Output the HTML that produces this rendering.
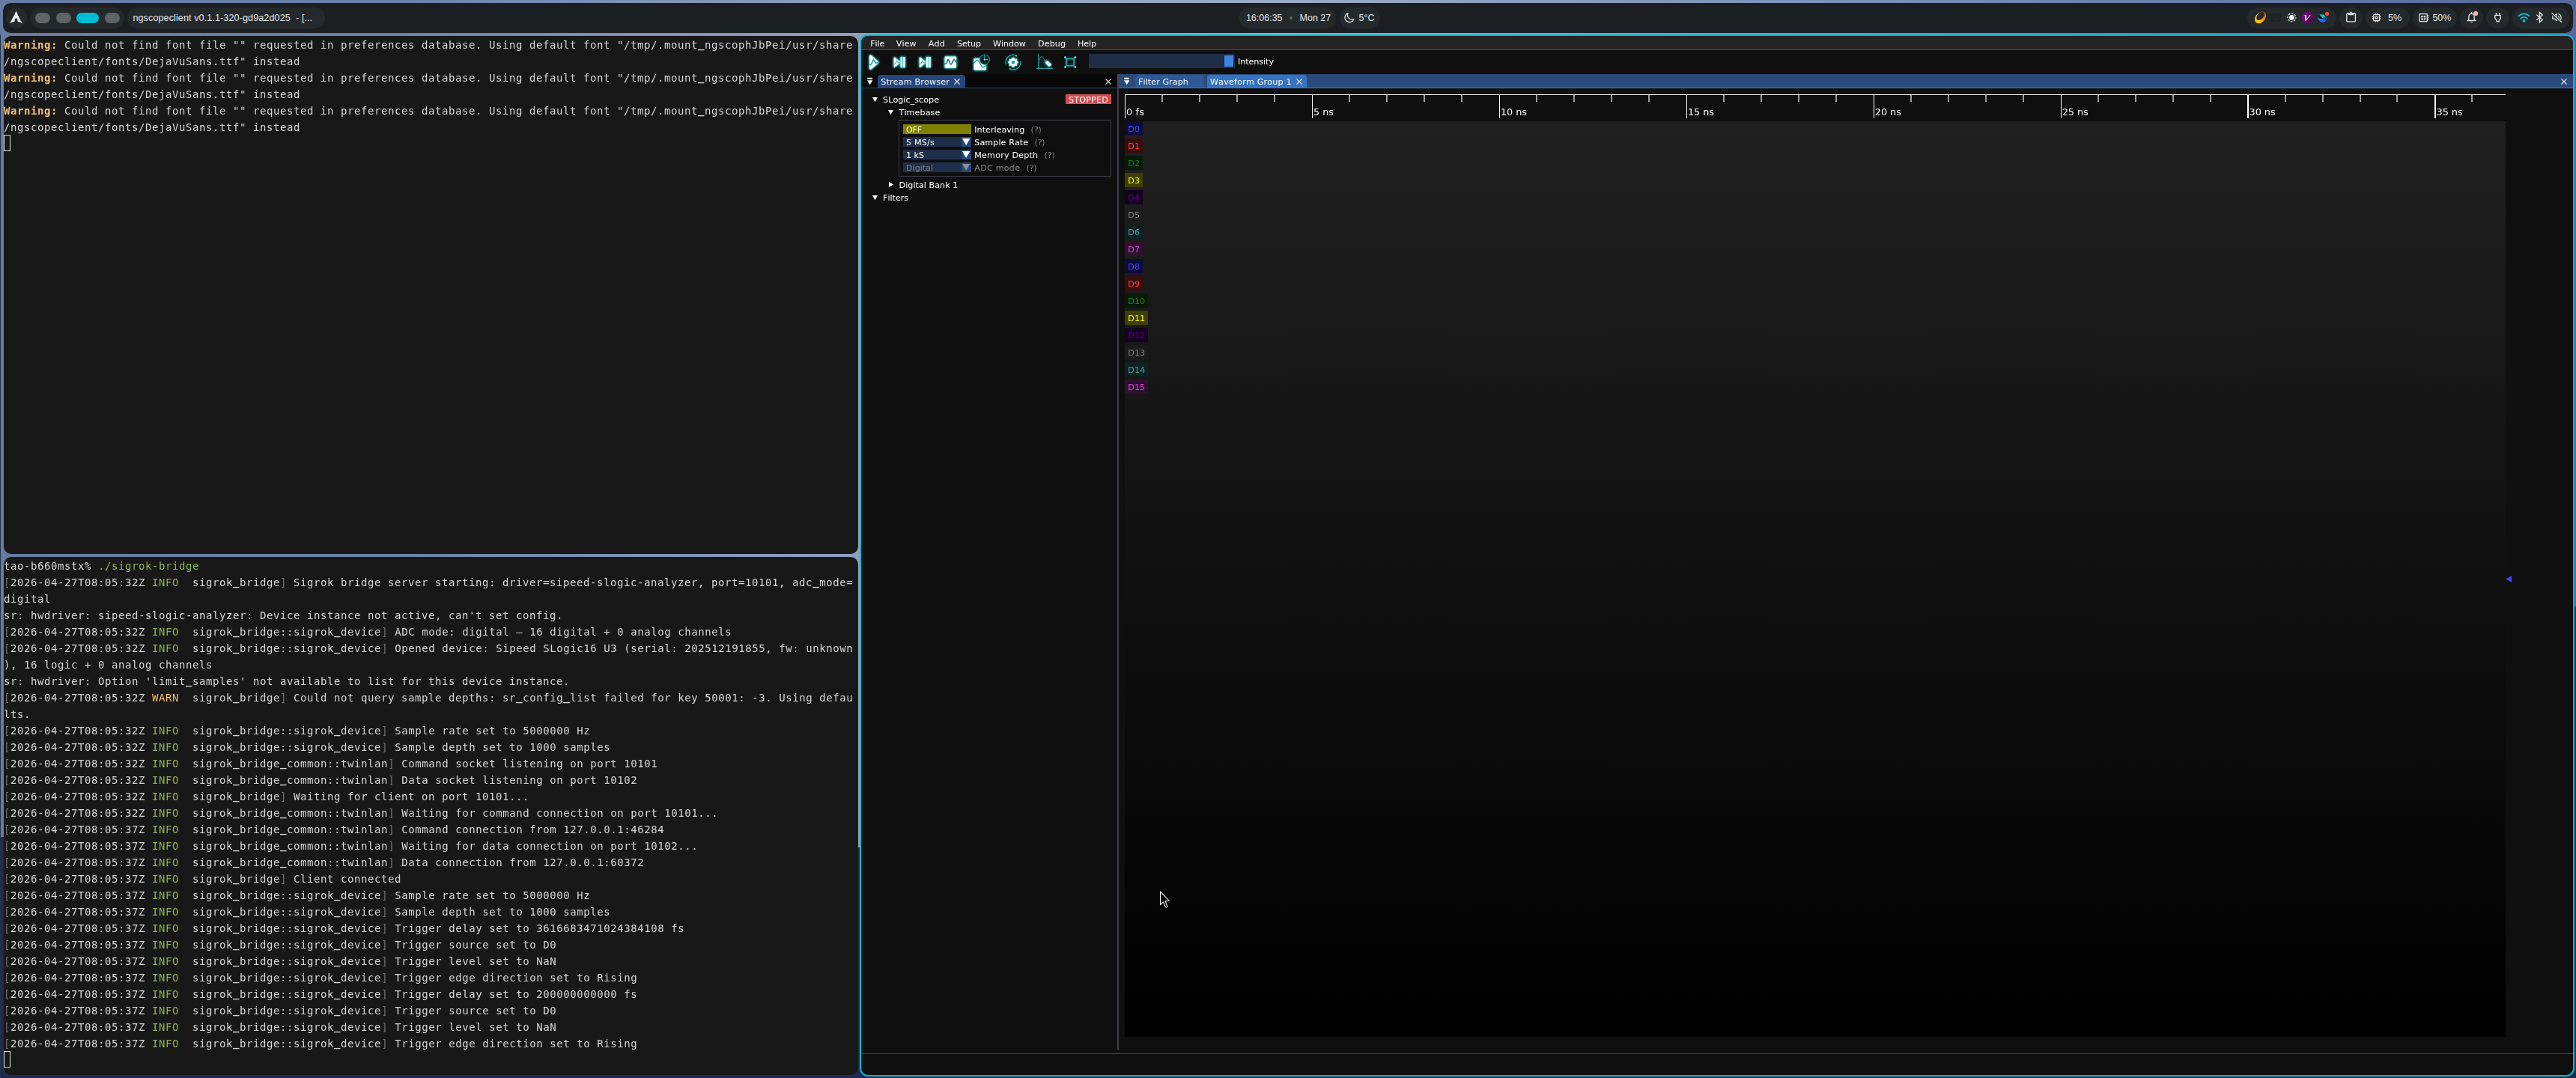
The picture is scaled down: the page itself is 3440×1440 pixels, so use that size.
<!DOCTYPE html>
<html lang="en"><head><meta charset="utf-8"><title>desktop</title>
<style>
*{box-sizing:border-box;margin:0;padding:0}
html,body{width:3440px;height:1440px;overflow:hidden}
body{position:relative;background:linear-gradient(90deg,#667ba3 0%,#6a82aa 15%,#8ea0c0 33%,#9aabc6 50%,#7d92b8 70%,#56699a 100%);
 font-family:"Liberation Sans",sans-serif}
#wall{position:absolute;left:0;top:0;width:3440px;height:1440px;background:#1d2c50;clip-path:polygon(0 1118px,1147px 1132px,3440px 810px,3440px 1440px,0 1440px)}
#ledge{position:absolute;left:0;top:46px;width:1px;height:1394px;background:#26324a}
.abs{position:absolute}

/* ---------- top bar ---------- */
#bar{position:absolute;left:4px;top:4px;width:3432px;height:40px;background:#1b1f22;border-radius:10px}
.pill{position:absolute;top:6px;height:28px;border-radius:14px;background:#24292c}
.bt{position:absolute;top:0;height:28px;line-height:28px;font-size:12.5px;color:#e4e6e8;white-space:pre}
.ws{position:absolute;top:7px;height:14px;border-radius:7px;background:#5f6467}
.pill svg{position:absolute;overflow:visible}

/* ---------- terminals ---------- */
.term{position:absolute;left:5px;width:1141px;height:692px;background:#181818;border-radius:10px;overflow:hidden;
 font-family:"DejaVu Sans Mono","Liberation Mono",monospace;font-size:14px;letter-spacing:0.5715px;color:#d6d6d6}
#term1{top:48px}
#term2{top:744px}
.tx{position:absolute;left:0;top:1px;width:1141px;height:690px;will-change:transform}
.ln{position:absolute;left:0;height:22px;line-height:22px;white-space:pre}
.u{position:relative;top:-1.2px;font-weight:bold}
.wb{font-weight:bold;color:#f6c177}
.gd{color:#707070}
.gi{color:#8fb052}
.gw{color:#f4bf6c}
.cur{position:absolute;left:0;width:9px;height:22px;border:1px solid #e6e6e6}

/* ---------- ngscopeclient ---------- */
#ngs{position:absolute;left:1148px;top:46px;width:2290px;height:1392px;border:2px solid #00bcd4;border-radius:11px;background:#0f0f0f;overflow:hidden;
 font-family:"DejaVu Sans","Liberation Sans",sans-serif;font-size:11.17px;color:#fff}
#ngsin{position:absolute;left:-1150px;top:-48px;width:3440px;height:1440px;will-change:transform}
#ngsin div{position:absolute}
.t{white-space:pre;line-height:13px;height:13px;font-kerning:none;font-variant-ligatures:none}
#menubar{left:1150px;top:48px;width:2286px;height:18px;background:#242424}
#menuline{left:1150px;top:66px;width:2286px;height:1px;background:#4a4a54}
#ltabbar{left:1150px;top:99px;width:342px;height:18px;background:#080808}
#ltabline{left:1150px;top:117px;width:342px;height:1px;background:#24467a}
#ltab{left:1172px;top:100px;width:117px;height:17px;background:#24467a;border-radius:4px 4px 0 0}
#split{left:1492px;top:99px;width:2px;height:1304px;background:#42424c}
#rtabbar{left:1494px;top:99px;width:1942px;height:18px;background:#2a4a7c}
#rtabline{left:1494px;top:117px;width:1942px;height:1px;background:#3b7bd0}
#rtab1{left:1516px;top:100px;width:92px;height:17px;background:#2d5a96;border-radius:4px 4px 0 0}
#rtab2{left:1612px;top:100px;width:133px;height:17px;background:#3572c0;border-radius:4px 4px 0 0}
#statline{left:1150px;top:1407px;width:2286px;height:1px;background:#42424c}
#tl{left:0;top:0;width:3440px;height:0}
#tltop{left:1502px;top:126px;width:1844px;height:1.3px;background:#fff}
.tkM{top:126px;width:1.6px;height:32px;background:#fff}
.tkm{top:127px;width:2.1px;height:9.2px;background:#9c9c9c}
.tkL{top:142px;font-size:12.886px;white-space:pre;line-height:15px;font-kerning:none;font-variant-ligatures:none}
#wave{left:1502px;top:162px;width:1844px;height:1223px;background:linear-gradient(180deg,#202020,#000)}
.ch{left:1502px;height:19px;line-height:22.6px;overflow:hidden;padding-left:4.3px;white-space:pre;font-kerning:none;font-variant-ligatures:none}
#slider{left:1454px;top:72px;width:194.5px;height:19px;background:#1f2d47}
#grab{left:1634.5px;top:74px;width:12px;height:15px;background:#3d85e0}
#stopped{left:1423px;top:126px;width:61.3px;height:13px;background:#cf4a4e;border:1px solid #de5659}
#tbframe{left:1200px;top:160px;width:284px;height:76px;border:1px solid #3c3c46}
.combo{left:1206px;width:91.2px;height:13px;background:#1f2f4a}
.cbtn{left:1284px;width:13.2px;height:13px;background:#244878}
.dim{color:#808080}
svg{overflow:visible}

</style></head>
<body>
<div id="wall"></div>
<div id="ledge"></div>
<div id="bar">
 <div class="pill" style="left:4px;width:28px">
  <svg style="left:4.6px;top:4.3px" width="17.9" height="17.9" viewBox="0 0 24 24"><path fill="#f2f4f8" d="M11.39.605C10.376 3.092 9.764 4.72 8.635 7.132c.693.734 1.543 1.589 2.923 2.554-1.484-.61-2.496-1.224-3.252-1.86C6.86 10.842 4.596 15.138 0 23.395c3.612-2.085 6.412-3.37 9.021-3.862a6.61 6.61 0 01-.171-1.547l.003-.115c.058-2.315 1.261-4.095 2.687-3.973 1.426.12 2.534 2.096 2.478 4.409a6.52 6.52 0 01-.146 1.243c2.58.505 5.352 1.787 8.914 3.844-.702-1.293-1.33-2.459-1.929-3.57-.943-.73-1.926-1.682-3.933-2.713 1.38.359 2.367.772 3.137 1.234-6.09-11.334-6.582-12.84-8.67-17.74z"/></svg>
 </div>
 <div class="pill" style="left:36px;width:126px">
  <div class="ws" style="left:7px;width:20px"></div>
  <div class="ws" style="left:34.5px;width:20px"></div>
  <div class="ws" style="left:62px;width:30px;background:#00bcd4"></div>
  <div class="ws" style="left:99.5px;width:20px"></div>
 </div>
 <div class="pill" style="left:166px;width:264px">
  <div class="bt" style="left:7.4px;font-size:12.7px;letter-spacing:0.05px">ngscopeclient v0.1.1-320-gd9a2d025  - [...</div>
 </div>

 <div class="pill" style="left:1651.4px;width:129px">
  <div class="bt" style="left:8.5px">16:06:35</div>
  <div class="abs" style="left:66.4px;top:11.9px;width:4.6px;height:4.6px;border-radius:50%;background:#5d6366"></div>
  <div class="bt" style="left:80.2px">Mon 27</div>
 </div>
 <div class="pill" style="left:1784.6px;width:54px">
  <svg style="left:6.9px;top:6.1px" width="14" height="14" viewBox="0 0 14 14"><path fill="none" stroke="#e4e6e8" stroke-width="1.2" stroke-linejoin="round" d="M5.21 1.53A6.2 6.2 0 1 0 13.07 9.39A5.8 5.8 0 0 1 5.21 1.53Z"/></svg>
  <div class="bt" style="left:26px">5°C</div>
 </div>

 <div class="pill" style="left:2997px;width:119px" id="tray"></div>
 <div class="pill" style="left:3120px;width:31px" id="clip"></div>
 <div class="pill" style="left:3155px;width:58.7px" id="cpu">
  <div class="bt" style="left:30px">5%</div>
 </div>
 <div class="pill" style="left:3218px;width:59px" id="ram">
  <div class="bt" style="left:26.4px">50%</div>
 </div>
 <div class="pill" style="left:3281px;width:31px" id="bell"></div>
 <div class="pill" style="left:3315.7px;width:31px" id="plug"></div>
 <div class="pill" style="left:3350.7px;width:77.3px" id="net"></div>
<!--IC0--> <svg class="abs" style="left:-4px;top:-4px" width="3440" height="48" viewBox="0 0 3440 48">
 <defs>
  <linearGradient id="sun" x1="3012" y1="27" x2="3026" y2="20" gradientUnits="userSpaceOnUse"><stop offset="0" stop-color="#ffb400"/><stop offset="0.3" stop-color="#ffd400"/><stop offset="0.62" stop-color="#f58a10"/><stop offset="1" stop-color="#ee4a20"/></linearGradient>
  <radialGradient id="pur" cx="3083.5" cy="25" r="8.5" gradientUnits="userSpaceOnUse"><stop offset="0" stop-color="#3c0040"/><stop offset="0.55" stop-color="#5e0062"/><stop offset="1" stop-color="#86008a"/></radialGradient>
 </defs>
 <!-- tray -->
 <path fill="url(#sun)" fill-rule="evenodd" d="M3012.48 30.09A9 6.3 -48 1 0 3024.52 16.71A9 6.3 -48 1 0 3012.48 30.09ZM3014.23 26.28A6.5 4.0 -48 1 1 3022.92 16.62A6.5 4.0 -48 1 1 3014.23 26.28Z"/>
 <rect x="3032.2" y="18.2" width="13.6" height="10.5" rx="1.6" fill="#1f2123"/>
 <rect x="3036" y="25.9" width="6" height="0.9" fill="#2b3033"/>
 <g fill="#25292b"><rect x="3034.2" y="20.4" width="1.2" height="1.2"/><rect x="3036.9" y="20.4" width="1.2" height="1.2"/><rect x="3039.6" y="20.4" width="1.2" height="1.2"/><rect x="3042.3" y="20.4" width="1.2" height="1.2"/><rect x="3034.2" y="23" width="1.2" height="1.2"/><rect x="3036.9" y="23" width="1.2" height="1.2"/><rect x="3039.6" y="23" width="1.2" height="1.2"/><rect x="3042.3" y="23" width="1.2" height="1.2"/></g>
 <circle cx="3060.4" cy="23.4" r="3.3" fill="#fff"/>
 <circle cx="3060.4" cy="23.4" r="5.4" fill="none" stroke="#d4d8da" stroke-width="1.35" stroke-dasharray="2.6 1.64" stroke-dashoffset="1.3"/>
 <circle cx="3081.6" cy="23.6" r="7.5" fill="url(#pur)"/>
 <path d="M3077 20.3H3080.4L3080.0 20.9L3079.9 26L3084 20.9L3083.2 20.3H3086L3079.2 28.2H3078.6L3077.9 21.2Z" fill="#fff"/>
 <path d="M3086 20.3L3079.2 28.2L3080 28.2L3086.6 20.8Z" fill="#2a002c"/>
 <!-- bird logo -->
 <path d="M3095 22.6C3095.2 27 3098 29.8 3101.4 29.8C3104.8 29.8 3107.6 26.6 3108 22.2C3104.8 24.6 3099.6 26.2 3095 22.6Z" fill="#2b6bf3"/>
 <path d="M3108 22.2C3105.8 23.6 3103 24.4 3100.4 24.6C3102.6 25.6 3104.6 26.6 3106.2 27.4C3107.3 26 3107.9 24.2 3108 22.2Z" fill="#173c9e"/>
 <path d="M3095.2 22.5L3097.3 20.6L3101.6 24.6L3099.6 25.2C3097.8 24.6 3096.4 23.6 3095.2 22.5Z" fill="#0c0f14"/>
 <path d="M3097.2 19.6H3103.6L3105.2 22.4L3101.7 24.3Z" fill="#06d6b4"/>
 <circle cx="3107.6" cy="18.4" r="2.55" fill="#f4483f"/>
 <!-- clipboard -->
 <rect x="3133.8" y="17.8" width="11.6" height="11.1" rx="0.9" fill="none" stroke="#e6e8ea" stroke-width="1.3"/>
 <path d="M3136 17.2H3138.1C3138.3 15.9 3138.8 15.4 3139.5 15.4C3140.2 15.4 3140.7 15.9 3140.9 17.2H3143.1V20.2H3136Z" fill="#e6e8ea"/>
 <circle cx="3139.5" cy="17.3" r="0.55" fill="#24292c"/>
 <!-- cpu -->
 <g transform="translate(3165.75 15.75) scale(0.655)"><path fill="#e6e8ea" d="M15 9H9v6h6V9zm-2 4h-2v-2h2v2zm8-2V9h-2V7c0-1.1-.9-2-2-2h-2V3h-2v2h-2V3H9v2H7c-1.1 0-2 .9-2 2v2H3v2h2v2H3v2h2v2c0 1.1.9 2 2 2h2v2h2v-2h2v2h2v-2h2c1.1 0 2-.9 2-2v-2h2v-2h-2v-2h2zm-4 6H7V7h10v10z"/></g>
 <!-- ram -->
 <rect x="3230.9" y="18.7" width="10.3" height="10" rx="0.6" fill="none" stroke="#e6e8ea" stroke-width="1.3"/>
 <g fill="#e6e8ea"><rect x="3233.2" y="21" width="2.4" height="2.3"/><rect x="3236.7" y="21" width="2.4" height="2.3"/><rect x="3233.2" y="24.3" width="2.4" height="2.3"/><rect x="3236.7" y="24.3" width="2.4" height="2.3"/>
 <rect x="3241.6" y="20.2" width="1.6" height="1.3"/><rect x="3241.6" y="23" width="1.6" height="1.3"/><rect x="3241.6" y="25.8" width="1.6" height="1.3"/></g>
 <!-- bell -->
 <path d="M3296.8 27.2V22.2A3.7 3.9 0 0 1 3304.2 22.2V27.2" fill="none" stroke="#e6e8ea" stroke-width="1.3"/>
 <path d="M3294.5 27.55H3306.7" stroke="#e6e8ea" stroke-width="1.3"/>
 <rect x="3299.8" y="15.9" width="1.4" height="2.4" rx="0.6" fill="#e6e8ea"/>
 <rect x="3299" y="28.9" width="3" height="1.2" rx="0.6" fill="#e6e8ea"/>
 <circle cx="3306.1" cy="18" r="3.1" fill="#f3b3b8"/>
 <!-- plug -->
 <path d="M3333.4 16.9V20.2M3337.8 16.9V20.2" stroke="#e6e8ea" stroke-width="1.3" fill="none"/>
 <path d="M3331.8 20.4H3339.4V24.6L3337.2 27V28.8H3334V27L3331.8 24.6Z" fill="none" stroke="#e6e8ea" stroke-width="1.3" stroke-linejoin="round"/>
 <!-- wifi -->
 <g fill="none" stroke="#00c6e2" stroke-width="1.95" stroke-linecap="round">
  <path d="M3363.5 21.2A10.2 10.2 0 0 1 3377.6 21.2"/>
  <path d="M3366.3 24.6A6 6 0 0 1 3374.7 24.6"/>
 </g>
 <circle cx="3370.5" cy="27.7" r="1.85" fill="#00c6e2"/>
 <!-- bluetooth -->
 <path d="M3387.3 19.8L3395.2 26.6L3391.4 29.8V16.5L3395.2 20L3387.3 26.8" fill="none" stroke="#e6e8ea" stroke-width="1.3" stroke-linejoin="miter"/>
 <!-- volume off -->
 <path d="M3408.8 21.3H3411.2L3414.4 18.6V27.8L3411.2 25.1H3408.8Z" fill="none" stroke="#e6e8ea" stroke-width="1.25" stroke-linejoin="round"/>
 <path d="M3416.4 21.4A2.6 2.6 0 0 1 3416.4 25.4" fill="none" stroke="#e6e8ea" stroke-width="1.25"/>
 <path d="M3416.6 18.4A5.6 5.6 0 0 1 3419 27" fill="none" stroke="#e6e8ea" stroke-width="1.25"/>
 <path d="M3407.2 17.4L3420.6 30" stroke="#24292c" stroke-width="3.2"/>
 <path d="M3407.6 17.3L3421 29.8" stroke="#e6e8ea" stroke-width="1.25"/>
 </svg>
<!--IC1-->
</div>
<div id="term1" class="term"><div class="tx">
<div class="ln" style="top:0px"><span class="wb">Warning:</span> Could not find font file "" requested in preferences database. Using default font "/tmp/.mount<span class="u">_</span>ngscophJbPei/usr/share</div>
<div class="ln" style="top:22px">/ngscopeclient/fonts/DejaVuSans.ttf" instead</div>
<div class="ln" style="top:44px"><span class="wb">Warning:</span> Could not find font file "" requested in preferences database. Using default font "/tmp/.mount<span class="u">_</span>ngscophJbPei/usr/share</div>
<div class="ln" style="top:66px">/ngscopeclient/fonts/DejaVuSans.ttf" instead</div>
<div class="ln" style="top:88px"><span class="wb">Warning:</span> Could not find font file "" requested in preferences database. Using default font "/tmp/.mount<span class="u">_</span>ngscophJbPei/usr/share</div>
<div class="ln" style="top:110px">/ngscopeclient/fonts/DejaVuSans.ttf" instead</div>
</div><div class="cur" style="top:132px"></div>
</div>
<div id="term2" class="term"><div class="tx">
<div class="ln" style="top:0px">tao-b660mstx% <span class="gi">./sigrok-bridge</span></div>
<div class="ln" style="top:22px"><span class="gd">[</span>2026-04-27T08:05:32Z <span class="gi">INFO</span>  sigrok<span class="u">_</span>bridge<span class="gd">]</span> Sigrok bridge server starting: driver=sipeed-slogic-analyzer, port=10101, adc<span class="u">_</span>mode=</div>
<div class="ln" style="top:44px">digital</div>
<div class="ln" style="top:66px">sr: hwdriver: sipeed-slogic-analyzer: Device instance not active, can't set config.</div>
<div class="ln" style="top:88px"><span class="gd">[</span>2026-04-27T08:05:32Z <span class="gi">INFO</span>  sigrok<span class="u">_</span>bridge::sigrok<span class="u">_</span>device<span class="gd">]</span> ADC mode: digital — 16 digital + 0 analog channels</div>
<div class="ln" style="top:110px"><span class="gd">[</span>2026-04-27T08:05:32Z <span class="gi">INFO</span>  sigrok<span class="u">_</span>bridge::sigrok<span class="u">_</span>device<span class="gd">]</span> Opened device: Sipeed SLogic16 U3 (serial: 202512191855, fw: unknown</div>
<div class="ln" style="top:132px">), 16 logic + 0 analog channels</div>
<div class="ln" style="top:154px">sr: hwdriver: Option 'limit<span class="u">_</span>samples' not available to list for this device instance.</div>
<div class="ln" style="top:176px"><span class="gd">[</span>2026-04-27T08:05:32Z <span class="gw">WARN</span>  sigrok<span class="u">_</span>bridge<span class="gd">]</span> Could not query sample depths: sr<span class="u">_</span>config<span class="u">_</span>list failed for key 50001: -3. Using defau</div>
<div class="ln" style="top:198px">lts.</div>
<div class="ln" style="top:220px"><span class="gd">[</span>2026-04-27T08:05:32Z <span class="gi">INFO</span>  sigrok<span class="u">_</span>bridge::sigrok<span class="u">_</span>device<span class="gd">]</span> Sample rate set to 5000000 Hz</div>
<div class="ln" style="top:242px"><span class="gd">[</span>2026-04-27T08:05:32Z <span class="gi">INFO</span>  sigrok<span class="u">_</span>bridge::sigrok<span class="u">_</span>device<span class="gd">]</span> Sample depth set to 1000 samples</div>
<div class="ln" style="top:264px"><span class="gd">[</span>2026-04-27T08:05:32Z <span class="gi">INFO</span>  sigrok<span class="u">_</span>bridge<span class="u">_</span>common::twinlan<span class="gd">]</span> Command socket listening on port 10101</div>
<div class="ln" style="top:286px"><span class="gd">[</span>2026-04-27T08:05:32Z <span class="gi">INFO</span>  sigrok<span class="u">_</span>bridge<span class="u">_</span>common::twinlan<span class="gd">]</span> Data socket listening on port 10102</div>
<div class="ln" style="top:308px"><span class="gd">[</span>2026-04-27T08:05:32Z <span class="gi">INFO</span>  sigrok<span class="u">_</span>bridge<span class="gd">]</span> Waiting for client on port 10101...</div>
<div class="ln" style="top:330px"><span class="gd">[</span>2026-04-27T08:05:32Z <span class="gi">INFO</span>  sigrok<span class="u">_</span>bridge<span class="u">_</span>common::twinlan<span class="gd">]</span> Waiting for command connection on port 10101...</div>
<div class="ln" style="top:352px"><span class="gd">[</span>2026-04-27T08:05:37Z <span class="gi">INFO</span>  sigrok<span class="u">_</span>bridge<span class="u">_</span>common::twinlan<span class="gd">]</span> Command connection from 127.0.0.1:46284</div>
<div class="ln" style="top:374px"><span class="gd">[</span>2026-04-27T08:05:37Z <span class="gi">INFO</span>  sigrok<span class="u">_</span>bridge<span class="u">_</span>common::twinlan<span class="gd">]</span> Waiting for data connection on port 10102...</div>
<div class="ln" style="top:396px"><span class="gd">[</span>2026-04-27T08:05:37Z <span class="gi">INFO</span>  sigrok<span class="u">_</span>bridge<span class="u">_</span>common::twinlan<span class="gd">]</span> Data connection from 127.0.0.1:60372</div>
<div class="ln" style="top:418px"><span class="gd">[</span>2026-04-27T08:05:37Z <span class="gi">INFO</span>  sigrok<span class="u">_</span>bridge<span class="gd">]</span> Client connected</div>
<div class="ln" style="top:440px"><span class="gd">[</span>2026-04-27T08:05:37Z <span class="gi">INFO</span>  sigrok<span class="u">_</span>bridge::sigrok<span class="u">_</span>device<span class="gd">]</span> Sample rate set to 5000000 Hz</div>
<div class="ln" style="top:462px"><span class="gd">[</span>2026-04-27T08:05:37Z <span class="gi">INFO</span>  sigrok<span class="u">_</span>bridge::sigrok<span class="u">_</span>device<span class="gd">]</span> Sample depth set to 1000 samples</div>
<div class="ln" style="top:484px"><span class="gd">[</span>2026-04-27T08:05:37Z <span class="gi">INFO</span>  sigrok<span class="u">_</span>bridge::sigrok<span class="u">_</span>device<span class="gd">]</span> Trigger delay set to 3616683471024384108 fs</div>
<div class="ln" style="top:506px"><span class="gd">[</span>2026-04-27T08:05:37Z <span class="gi">INFO</span>  sigrok<span class="u">_</span>bridge::sigrok<span class="u">_</span>device<span class="gd">]</span> Trigger source set to D0</div>
<div class="ln" style="top:528px"><span class="gd">[</span>2026-04-27T08:05:37Z <span class="gi">INFO</span>  sigrok<span class="u">_</span>bridge::sigrok<span class="u">_</span>device<span class="gd">]</span> Trigger level set to NaN</div>
<div class="ln" style="top:550px"><span class="gd">[</span>2026-04-27T08:05:37Z <span class="gi">INFO</span>  sigrok<span class="u">_</span>bridge::sigrok<span class="u">_</span>device<span class="gd">]</span> Trigger edge direction set to Rising</div>
<div class="ln" style="top:572px"><span class="gd">[</span>2026-04-27T08:05:37Z <span class="gi">INFO</span>  sigrok<span class="u">_</span>bridge::sigrok<span class="u">_</span>device<span class="gd">]</span> Trigger delay set to 200000000000 fs</div>
<div class="ln" style="top:594px"><span class="gd">[</span>2026-04-27T08:05:37Z <span class="gi">INFO</span>  sigrok<span class="u">_</span>bridge::sigrok<span class="u">_</span>device<span class="gd">]</span> Trigger source set to D0</div>
<div class="ln" style="top:616px"><span class="gd">[</span>2026-04-27T08:05:37Z <span class="gi">INFO</span>  sigrok<span class="u">_</span>bridge::sigrok<span class="u">_</span>device<span class="gd">]</span> Trigger level set to NaN</div>
<div class="ln" style="top:638px"><span class="gd">[</span>2026-04-27T08:05:37Z <span class="gi">INFO</span>  sigrok<span class="u">_</span>bridge::sigrok<span class="u">_</span>device<span class="gd">]</span> Trigger edge direction set to Rising</div>
</div><div class="cur" style="top:660px"></div>
</div>
<div id="ngs"><div id="ngsin">
<div id="menubar"></div>
<div id="menuline"></div>
<div class="t" style="left:1162.3px;top:52.4px;letter-spacing:-0.125px">File</div>
<div class="t" style="left:1196.8px;top:52.4px;letter-spacing:0.063px">View</div>
<div class="t" style="left:1239.8px;top:52.4px;letter-spacing:0.061px">Add</div>
<div class="t" style="left:1278.1px;top:52.4px;letter-spacing:-0.101px">Setup</div>
<div class="t" style="left:1326px;top:52.4px;letter-spacing:-0.047px">Window</div>
<div class="t" style="left:1386.1px;top:52.4px;letter-spacing:0.055px">Debug</div>
<div class="t" style="left:1439.1px;top:52.4px;letter-spacing:-0.115px">Help</div>
<!--TB0--><svg class="abs" style="left:1154px;top:68px" width="290" height="30" viewBox="1154 68 290 30">
<defs>
<filter id="gl" x="-40%" y="-40%" width="180%" height="180%" color-interpolation-filters="sRGB">
<feGaussianBlur in="SourceAlpha" stdDeviation="1.35" result="b"/>
<feFlood flood-color="#22c4c4" flood-opacity="1"/><feComposite in2="b" operator="in" result="g"/>
<feMerge><feMergeNode in="g"/><feMergeNode in="g"/><feMergeNode in="g"/><feMergeNode in="SourceGraphic"/></feMerge>
</filter>
<filter id="gl2" x="-40%" y="-40%" width="180%" height="180%" color-interpolation-filters="sRGB"><feGaussianBlur in="SourceAlpha" stdDeviation="1.1" result="b"/><feFlood flood-color="#1a9a9a" flood-opacity="0.8"/><feComposite in2="b" operator="in" result="g"/><feMerge><feMergeNode in="g"/><feMergeNode in="SourceGraphic"/></feMerge></filter>
</defs>
<!-- 1 run -->
<g filter="url(#gl)">
<path d="M1162.4 74.8V91.6L1172 83.2Z" fill="#fff" stroke="#fff" stroke-width="2.6" stroke-linejoin="round"/>
</g>
<path d="M1160.8 86.4L1163.3 86.2L1166.5 79.6L1169.6 84.3L1172.6 83.4" fill="none" stroke="#1aa6a6" stroke-width="1.6" stroke-linejoin="round"/>
<!-- 2 single -->
<g filter="url(#gl)">
<path d="M1194.2 77V89.6L1201.9 83.3Z" fill="#fff" stroke="#fff" stroke-width="1.1" stroke-linejoin="round"/>
<rect x="1202.6" y="76" width="2.5" height="14.2" fill="#fff"/>
<rect x="1206.1" y="76" width="2.5" height="14.2" fill="#fff"/>
</g>
<path d="M1193.4 85.6L1195.6 85.3L1197.4 80.8L1199.4 84.3L1202 83.2" fill="none" stroke="#2aa8a8" stroke-width="1" stroke-linejoin="round"/>
<!-- 3 force -->
<g filter="url(#gl)">
<path d="M1228.4 77V89.6L1236.1 83.3Z" fill="#fff" stroke="#fff" stroke-width="1.1" stroke-linejoin="round"/>
<rect x="1236.9" y="76" width="2.5" height="14.2" fill="#fff"/>
<rect x="1240.2" y="76" width="2.5" height="14.2" fill="#fff"/>
</g>
<rect x="1239.4" y="76.4" width="0.8" height="13.4" fill="#9fd6d6"/>
<path d="M1227.6 85.6L1229.8 85.3L1231.6 80.8L1233.6 84.3L1236.2 83.2" fill="none" stroke="#2aa8a8" stroke-width="1" stroke-linejoin="round"/>
<!-- 4 stop -->
<g filter="url(#gl)">
<rect x="1261.6" y="75.6" width="15.4" height="15.2" rx="1.2" fill="#fff"/>
</g>
<path d="M1261 85.6C1263 85.6 1263.6 85.4 1264.2 84C1265 82 1265.5 79.4 1266.4 79.4C1267.5 79.4 1268.6 86 1270 86C1271.4 86 1272.8 79.4 1274 79.4C1275 79.4 1275.8 82.4 1277.6 84" fill="none" stroke="#0f7878" stroke-width="1.6"/>
<!-- 5 history -->
<g filter="url(#gl)">
<rect x="1300.6" y="78.2" width="16.2" height="15.2" rx="1.2" fill="#fff"/>
</g>
<path d="M1300.4 84.6C1302 82 1303.5 80.6 1305 80.6C1308.5 80.6 1309.5 90 1313 90C1314.6 90 1316 88.4 1317 86" fill="none" stroke="#1a8c8c" stroke-width="1.3"/>
<circle cx="1314.9" cy="79.6" r="6.6" fill="#0a2426" stroke="#2aa0a0" stroke-width="0.95"/>
<path d="M1314.9 79.8V73.8M1314.7 79.6H1319.3" stroke="#3ab4b4" stroke-width="1" fill="none"/>
<circle cx="1314.6" cy="79.7" r="0.9" fill="#c8f0f0"/>
<!-- 6 refresh settings -->
<g filter="url(#gl2)" fill="none" stroke="#2aa6a8" stroke-width="1.15">
<path d="M1356.8 74.1A9.9 9.9 0 0 0 1343.5 86.1"/>
<path d="M1362.8 81.7A9.9 9.9 0 0 1 1349 92.4"/>
</g>
<circle cx="1357" cy="74.7" r="1.15" fill="#3cc0c0"/><circle cx="1348.7" cy="91.9" r="1.15" fill="#3cc0c0"/>
<g transform="translate(1353 83.3) scale(0.9) translate(-1353 -83.3)">
<g filter="url(#gl)">
<path id="gear" fill="#fff" d="M1353 76.2L1354.5 76.4L1355 78.2L1356.3 78.8L1357.9 77.9L1359 79L1358.1 80.6L1358.7 81.9L1360.5 82.4V84.2L1358.7 84.7L1358.1 86L1359 87.6L1357.9 88.7L1356.3 87.8L1355 88.4L1354.5 90.2H1351.5L1351 88.4L1349.7 87.8L1348.1 88.7L1347 87.6L1347.9 86L1347.3 84.7L1345.5 84.2V82.4L1347.3 81.9L1347.9 80.6L1347 79L1348.1 77.9L1349.7 78.8L1351 78.2L1351.5 76.4Z"/>
</g>
<circle cx="1353" cy="83.3" r="2.5" fill="#12a0a4"/>
</g>
<!-- 7 clear persistence -->
<path d="M1387.4 80.8C1388.6 77.6 1389.8 75.6 1391.3 75.6C1393.2 75.6 1393.8 78.6 1395.2 80.8L1401 90.8H1387.4Z" fill="#0a2022"/>
<g fill="none" stroke="#2a9ea0" stroke-width="1.3">
<path d="M1386.9 72.2V93.6M1384.2 91.3H1405.8"/>
</g>
<path d="M1387.2 81C1388.6 77.6 1389.8 75.6 1391.3 75.6C1393.2 75.6 1393.8 79 1395.6 81.4" fill="none" stroke="#2a9ea0" stroke-width="0.9"/>
<g filter="url(#gl)">
<rect x="-2.1" y="-4.4" width="4.2" height="8.2" rx="1.2" transform="translate(1400 85.2) rotate(-45)" fill="#fff"/>
</g>
<rect x="-2" y="-5.9" width="4" height="2" rx="0.8" transform="translate(1400 85.2) rotate(-45)" fill="none" stroke="#2a9ea0" stroke-width="0.7"/>
<!-- 8 fullscreen -->
<g filter="url(#gl2)" opacity="0.95">
<rect x="1424" y="78.4" width="10.2" height="9.4" fill="none" stroke="#2aa8aa" stroke-width="1.7"/>
</g>
<g fill="#5ad8d8"><circle cx="1422.5" cy="76.6" r="1.5"/><circle cx="1435.8" cy="76.6" r="1.5"/><circle cx="1422.5" cy="89.6" r="1.5"/><circle cx="1435.8" cy="89.6" r="1.5"/></g>
<g stroke="#15686a" stroke-width="0.9" fill="none"><path d="M1426.4 80.6L1428 82.2M1431.8 80.6L1430.2 82.2M1426.4 85.6L1428 84M1431.8 85.6L1430.2 84"/></g>
</svg>
<!--TB1-->
<div id="slider"></div>
<div id="grab"></div>
<div class="t" style="left:1653px;top:75.6px;letter-spacing:-0.068px">Intensity</div>

<div id="ltabbar"></div>
<div id="ltabline"></div>
<div id="ltab"></div>
<div class="t" style="left:1176.2px;top:103px;letter-spacing:0.164px">Stream Browser</div>
<svg class="abs" style="left:1158px;top:103px" width="7.4" height="10.4" viewBox="0 0 7.4 10.4"><rect x="0.3" y="0.8" width="6.8" height="2.1" fill="#fff"/><path d="M0 4.2H7.4L3.7 10.2Z" fill="#fff"/></svg>
<svg class="abs" style="left:1274.4px;top:104.6px" width="8" height="8" viewBox="0 0 8 8"><path d="M0.4 0.4L7.6 7.6M7.6 0.4L0.4 7.6" stroke="#fff" stroke-width="1.1" fill="none"/></svg>
<svg class="abs" style="left:1476.2px;top:104.6px" width="8" height="8" viewBox="0 0 8 8"><path d="M0.4 0.4L7.6 7.6M7.6 0.4L0.4 7.6" stroke="#fff" stroke-width="1.1" fill="none"/></svg>

<svg class="abs" style="left:1165.2px;top:129.6px" width="7" height="6.2" viewBox="0 0 7 6.2"><path d="M0 0H7L3.5 6.2Z" fill="#fff"/></svg>
<div class="t" style="left:1179.1px;top:127px;letter-spacing:0.016px">SLogic_scope</div>
<div id="stopped"></div><div class="t" style="left:1423px;top:127px;width:61px;text-align:center;letter-spacing:0.168px">STOPPED</div>
<svg class="abs" style="left:1186.2px;top:146.6px" width="7" height="6.2" viewBox="0 0 7 6.2"><path d="M0 0H7L3.5 6.2Z" fill="#fff"/></svg>
<div class="t" style="left:1200.5px;top:144px;letter-spacing:0.088px">Timebase</div>
<div id="tbframe"></div>
<div class="combo" style="top:166px;background:#808000"></div><div class="t" style="left:1210px;top:166.9px;letter-spacing:-0.213px">OFF</div>
<div class="combo" style="top:183px"></div><div class="t" style="left:1210px;top:183.9px;letter-spacing:0.173px">5 MS/s</div><div class="cbtn" style="top:183px"></div>
<div class="combo" style="top:200px"></div><div class="t" style="left:1210px;top:200.9px;letter-spacing:-0.053px">1 kS</div><div class="cbtn" style="top:200px"></div>
<div class="combo" style="top:217px"></div><div class="t dim" style="left:1210px;top:217.9px;letter-spacing:-0.031px">Digital</div><div class="cbtn" style="top:217px"></div>
<svg class="abs" style="left:1285.1px;top:185.2px" width="10.4" height="9" viewBox="0 0 10.4 9"><path d="M0 0H10.4L5.2 9Z" fill="#fff"/></svg>
<svg class="abs" style="left:1285.1px;top:202.2px" width="10.4" height="9" viewBox="0 0 10.4 9"><path d="M0 0H10.4L5.2 9Z" fill="#fff"/></svg>
<svg class="abs" style="left:1285.1px;top:219.2px" width="10.4" height="9" viewBox="0 0 10.4 9"><path d="M0 0H10.4L5.2 9Z" fill="#8a8f98"/></svg>
<div class="t" style="left:1301.3px;top:166.9px;letter-spacing:0.008px">Interleaving</div><div class="t dim" style="left:1376.6px;top:166.9px;letter-spacing:-0.214px">(?)</div>
<div class="t" style="left:1301.3px;top:183.9px;letter-spacing:0.066px">Sample Rate</div><div class="t dim" style="left:1381.5px;top:183.9px;letter-spacing:-0.214px">(?)</div>
<div class="t" style="left:1301.3px;top:200.9px;letter-spacing:0.168px">Memory Depth</div><div class="t dim" style="left:1394.6px;top:200.9px;letter-spacing:-0.214px">(?)</div>
<div class="t dim" style="left:1301.3px;top:217.9px;letter-spacing:0.218px">ADC mode</div><div class="t dim" style="left:1370.5px;top:217.9px;letter-spacing:-0.214px">(?)</div>
<svg class="abs" style="left:1186.6px;top:243.2px" width="6.2" height="7" viewBox="0 0 6.2 7"><path d="M0 0V7L6.2 3.5Z" fill="#fff"/></svg>
<div class="t" style="left:1200.5px;top:240.8px;letter-spacing:0.037px">Digital Bank 1</div>
<svg class="abs" style="left:1165.2px;top:260.6px" width="7" height="6.2" viewBox="0 0 7 6.2"><path d="M0 0H7L3.5 6.2Z" fill="#fff"/></svg>
<div class="t" style="left:1179.1px;top:257.5px;letter-spacing:-0.041px">Filters</div>

<div id="split"></div>
<div id="rtabbar"></div>
<div id="rtabline"></div>
<div id="rtab1"></div>
<div id="rtab2"></div>
<svg class="abs" style="left:1501px;top:103px" width="7.4" height="10.4" viewBox="0 0 7.4 10.4"><rect x="0.3" y="0.8" width="6.8" height="2.1" fill="#fff"/><path d="M0 4.2H7.4L3.7 10.2Z" fill="#fff"/></svg>
<div class="t" style="left:1520px;top:103px;letter-spacing:0.060px">Filter Graph</div>
<div class="t" style="left:1616px;top:103px;letter-spacing:0.184px">Waveform Group 1</div>
<svg class="abs" style="left:1731.2px;top:104.6px" width="8" height="8" viewBox="0 0 8 8"><path d="M0.4 0.4L7.6 7.6M7.6 0.4L0.4 7.6" stroke="#fff" stroke-width="1.1" fill="none"/></svg>
<svg class="abs" style="left:3420.2px;top:104.6px" width="8" height="8" viewBox="0 0 8 8"><path d="M0.4 0.4L7.6 7.6M7.6 0.4L0.4 7.6" stroke="#fff" stroke-width="1.1" fill="none"/></svg>
<div id="tltop"></div>
<div id="tl">
<div class="tkM" style="left:1501.9px"></div>
<div class="tkL" style="left:1504.1px;letter-spacing:0.114px">0 fs</div>
<div class="tkm" style="left:1550.9px"></div>
<div class="tkm" style="left:1600.9px"></div>
<div class="tkm" style="left:1650.9px"></div>
<div class="tkm" style="left:1700.9px"></div>
<div class="tkM" style="left:1751.8px"></div>
<div class="tkL" style="left:1754.0px;letter-spacing:-0.044px">5 ns</div>
<div class="tkm" style="left:1800.9px"></div>
<div class="tkm" style="left:1850.8px"></div>
<div class="tkm" style="left:1900.8px"></div>
<div class="tkm" style="left:1950.8px"></div>
<div class="tkM" style="left:2001.7px"></div>
<div class="tkL" style="left:2003.9px;letter-spacing:-0.075px">10 ns</div>
<div class="tkm" style="left:2050.8px"></div>
<div class="tkm" style="left:2100.8px"></div>
<div class="tkm" style="left:2150.8px"></div>
<div class="tkm" style="left:2200.7px"></div>
<div class="tkM" style="left:2251.7px"></div>
<div class="tkL" style="left:2253.9px;letter-spacing:-0.075px">15 ns</div>
<div class="tkm" style="left:2300.7px"></div>
<div class="tkm" style="left:2350.7px"></div>
<div class="tkm" style="left:2400.7px"></div>
<div class="tkm" style="left:2450.7px"></div>
<div class="tkM" style="left:2501.6px"></div>
<div class="tkL" style="left:2503.8px;letter-spacing:-0.075px">20 ns</div>
<div class="tkm" style="left:2550.6px"></div>
<div class="tkm" style="left:2600.6px"></div>
<div class="tkm" style="left:2650.6px"></div>
<div class="tkm" style="left:2700.6px"></div>
<div class="tkM" style="left:2751.5px"></div>
<div class="tkL" style="left:2753.7px;letter-spacing:-0.075px">25 ns</div>
<div class="tkm" style="left:2800.6px"></div>
<div class="tkm" style="left:2850.5px"></div>
<div class="tkm" style="left:2900.5px"></div>
<div class="tkm" style="left:2950.5px"></div>
<div class="tkM" style="left:3001.4px"></div>
<div class="tkL" style="left:3003.6px;letter-spacing:-0.075px">30 ns</div>
<div class="tkm" style="left:3050.5px"></div>
<div class="tkm" style="left:3100.5px"></div>
<div class="tkm" style="left:3150.5px"></div>
<div class="tkm" style="left:3200.4px"></div>
<div class="tkM" style="left:3251.4px"></div>
<div class="tkL" style="left:3253.6px;letter-spacing:-0.075px">35 ns</div>
<div class="tkm" style="left:3300.4px"></div>
</div>
<div id="wave"></div>
<div class="ch" style="top:162px;width:24px;color:#4040ff;background:#0c0c3a;letter-spacing:0.148px">D0</div>
<div class="ch" style="top:185px;width:24px;color:#ff4040;background:#3a0c0c;letter-spacing:0.148px">D1</div>
<div class="ch" style="top:208px;width:24px;color:#208020;background:#061a06;letter-spacing:0.148px">D2</div>
<div class="ch" style="top:231px;width:24px;color:#ffff00;background:#3f3f00;letter-spacing:0.148px">D3</div>
<div class="ch" style="top:254px;width:24px;color:#600080;background:#140020;letter-spacing:0.148px">D4</div>
<div class="ch" style="top:277px;width:24px;color:#808080;background:#1c1c1c;letter-spacing:0.148px">D5</div>
<div class="ch" style="top:300px;width:24px;color:#40a0a0;background:#0e2223;letter-spacing:0.148px">D6</div>
<div class="ch" style="top:323px;width:24px;color:#e040e0;background:#301030;letter-spacing:0.148px">D7</div>
<div class="ch" style="top:346px;width:24px;color:#4040ff;background:#0c0c3a;letter-spacing:0.148px">D8</div>
<div class="ch" style="top:369px;width:24px;color:#ff4040;background:#3a0c0c;letter-spacing:0.148px">D9</div>
<div class="ch" style="top:392px;width:31px;color:#208020;background:#061a06;letter-spacing:0.063px">D10</div>
<div class="ch" style="top:415px;width:31px;color:#ffff00;background:#3f3f00;letter-spacing:0.063px">D11</div>
<div class="ch" style="top:438px;width:31px;color:#600080;background:#140020;letter-spacing:0.063px">D12</div>
<div class="ch" style="top:461px;width:31px;color:#808080;background:#1c1c1c;letter-spacing:0.063px">D13</div>
<div class="ch" style="top:484px;width:31px;color:#40a0a0;background:#0e2223;letter-spacing:0.063px">D14</div>
<div class="ch" style="top:507px;width:31px;color:#e040e0;background:#301030;letter-spacing:0.063px">D15</div>
<svg class="abs" style="left:3345.8px;top:769px" width="8.2" height="9" viewBox="0 0 8.2 9"><path d="M0 4.5L8.2 0V9Z" fill="#4040ff"/></svg>
<div id="statline"></div>
<svg class="abs" style="left:1548px;top:1190px" width="15" height="24" viewBox="0 0 15 24"><path d="M1.5 1.2V18.6L5.5 14.9L8.2 21.3Q8.8 22.4 10 21.9Q11.1 21.4 10.7 20.2L8.1 13.6L13.3 13.2Z" fill="#000" stroke="#fff" stroke-width="1.1" stroke-linejoin="miter"/></svg>
</div></div>
</body></html>
